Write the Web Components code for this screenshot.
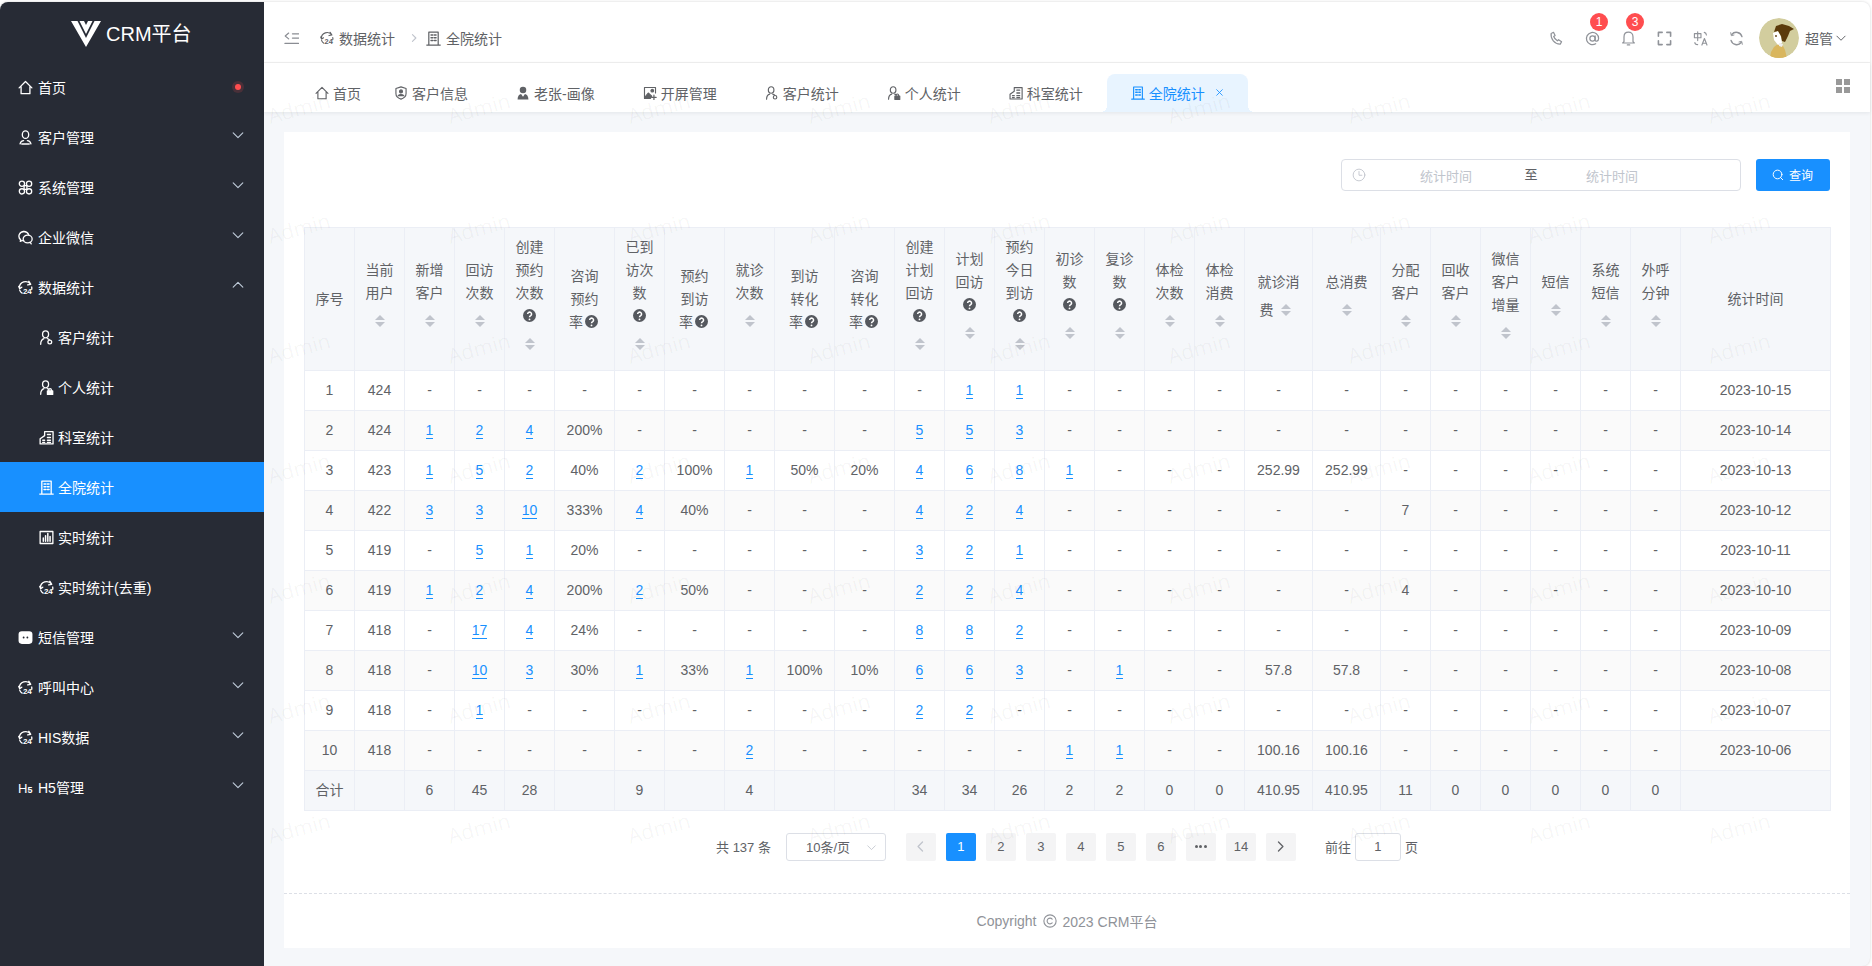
<!DOCTYPE html>
<html lang="zh"><head><meta charset="utf-8"><title>CRM平台</title>
<style>
html,body{margin:0;padding:0;height:100%;background:#fff;overflow:hidden}
body{font-family:"Liberation Sans","Noto Sans CJK SC",sans-serif;font-size:14px;color:#606266}
</style></head><body>
<crm-app></crm-app>
<script>
const ICONS={
home:'<path d="M1.2 8.400 8 1.600l6.800 6.800M3.300 7v7.600h9.400V7"/>',
user:'<ellipse cx="8" cy="5" rx="3.400" ry="4"/><path d="M2.200 14.800c.5-2.400 2.500-3.500 3.800-3.500M13.800 14.800c-.5-2.400-2.500-3.500-3.800-3.500M4 14.900h8"/>',
system:'<circle cx="4.200" cy="3.900" r="2.800"/><circle cx="11.800" cy="3.900" r="2.800"/><circle cx="4.200" cy="12.100" r="2.800"/><circle cx="11.800" cy="12.100" r="2.800"/><path d="M6.500 6h3v4h-3z"/>',
wechat:'<path d="M6.300 1.600a5.300 5 0 0 0-3.400 8.800l-.5 1.700 2.200-.9c.6.200 1.200.3 1.700.3"/><path d="M6.300 1.600a5.300 5 0 0 1 5 3.300"/><ellipse cx="10.300" cy="9.600" rx="4.800" ry="4.100"/><path d="M12.800 13l1.300 1.800"/>',
s24:'<path d="M1.600 8.500A6.500 6.500 0 0 1 13.400 4.500M14.600 7.500c.2.800.2 1.600 0 2.400M1.800 10.800c.4 1.300 1.300 2.500 2.600 3.200M11.600 1.400l2 3.200-3.300.6M.8 6.800l1 2.400 2.200-1.500"/><text x="5.200" y="15.400" font-size="8.500" font-weight="700" fill="currentColor" stroke="none" font-family="Liberation Sans">24</text>',
pkey:'<ellipse cx="7" cy="4.600" rx="3.200" ry="3.700"/><path d="M1.800 15.200c0-3.200 1.600-5.300 3.500-5.900M8.800 9.300c1 .2 1.700.6 2.300 1.200"/><circle cx="11.500" cy="12.800" r="2"/>',
plock:'<ellipse cx="7" cy="4.600" rx="3.200" ry="3.700"/><path d="M1.800 15.200c0-3.200 1.600-5.300 3.500-5.900M8.800 9.300c.6.100 1 .3 1.400.5"/><path d="M9 11.600h5.600v3.800H9z" fill="currentColor"/><path d="M10.400 11.600v-1a1.400 1.400 0 0 1 2.800 0v1"/>',
dept:'<path d="M1.200 14.800V9.400L6 6V1.800h9v13z"/><path d="M4 11h2M4 13.200h2M9 4.800h3.200M9 8h3.200M9 11h3.200M9 13.200h3.200" stroke-width="1.500"/>',
building:'<path d="M3 14.600V1.200h10v13.400M.8 15h14.400"/><path d="M5.400 4.200h1.800M8.900 4.200h1.800M5.400 7.200h1.800M8.900 7.200h1.800M5.400 10.200h1.800M8.900 10.200h1.800" stroke-width="1.600"/>',
chart:'<path d="M1.200 1.600h13.600v12.800H1.200z"/><path d="M4.600 12V8.400M7 12V6M9.400 12V3.800M11.800 12V7" stroke-width="1.600"/>',
msg:'<rect x=".6" y="1.200" width="14.800" height="13.600" rx="3.500" fill="currentColor" stroke="none"/><circle cx="6" cy="8" r="1" fill="#272b35" stroke="none"/><circle cx="10" cy="8" r="1" fill="#272b35" stroke="none"/>',
h5:'<text x="0" y="13.600" font-size="14" fill="currentColor" stroke="none" font-family="Liberation Sans">H</text><text x="10" y="14" font-size="9.500" font-weight="700" fill="currentColor" stroke="none" font-family="Liberation Sans">5</text>',
shield:'<path d="M8 1l5.800 1.900v5.700c0 3.300-2.700 5.400-5.800 6.400-3.100-1-5.800-3.100-5.800-6.400V2.900z"/><circle cx="8" cy="6.200" r="1.700" fill="currentColor"/><path d="M4.800 11c.6-1.800 5.800-1.800 6.400 0z" fill="currentColor"/>',
psolid:'<circle cx="8" cy="4.600" r="3.700" fill="currentColor" stroke="none"/><path d="M1.800 15.400c0-4 1.900-5.600 4-6.200l2.200 3 2.200-3c2.100.6 4 2.200 4 6.200z" fill="currentColor" stroke="none"/>',
imgplus:'<path d="M14.300 8V1.700H1.700v12.600H8"/><path d="M2 13l4-5 4 3.600-1.600 2.600H2z" fill="currentColor"/><circle cx="10.600" cy="5.400" r="1.500" fill="currentColor"/><path d="M12.500 10.500v5M10 13h5" stroke-width="1.400"/>',
collapse:'<path d="M9 3h6.500M9 7.500h6.500M1 13.300h14.500"/><path d="M5 2.200 1.300 5.300 5 8.400"/>',
chev:'<path d="M2.500 5.500 8 11l5.500-5.500"/>',
chevup:'<path d="M2.500 10.500 8 5l5.500 5.500"/>',
phone:'<path d="M2.300 2.600 4.800 1.400l1.700 3.300-1.500 1.200c.7 1.900 2 3.400 3.900 4.600l1.300-1.200 3.200 2.200-1.400 2.500c-6 .2-10.600-5.600-9.700-11.400z"/>',
at:'<circle cx="8" cy="8" r="2.800"/><path d="M10.800 5.300v4c0 2.400 3.700 2 3.700-1.300A6.500 6.500 0 1 0 11.400 13.600"/>',
bell:'<path d="M8 1.300c-2.900 0-4.800 2-4.800 5v5L1.800 12.800h12.400L12.800 11.300v-5c0-3-1.900-5-4.800-5z"/><path d="M6.800 14.800h2.400" stroke-width="1.500"/>',
full:'<path d="M1.500 5.500v-4h4M10.500 1.500h4v4M14.500 10.500v4h-4M5.500 14.500h-4v-4" stroke-width="1.700"/>',
trans:'<path d="M1.500 2.800h7v4.400h-7zM5 .8v9.400M2 12.200c0 1.500 1 2.300 3 2.300M12 1.500c1.400.3 2.200 1.200 2.300 2.700M9.500 15l2.700-7 2.700 7M10.500 13h3.500" stroke-width="1.200"/>',
refresh:'<path d="M13.800 6A6.200 6.200 0 0 0 3 3.700M2.200 10a6.200 6.200 0 0 0 10.800 2.300" stroke-width="1.500"/><path d="M1.800 1.800 2.500 5l2.800-.7M14.200 14.200 13.500 11l-2.800.7" stroke-width="1"/>',
clock:'<circle cx="8" cy="8" r="6.700"/><path d="M8 4v4.300h3.300"/>',
search:'<circle cx="7.400" cy="7.300" r="5.800"/><path d="M11.500 11.500l2.800 2.800"/>',
left:'<path d="M10.500 2.500 5 8l5.500 5.500"/>',
right:'<path d="M5.500 2.500 11 8l-5.500 5.500"/>',
close:'<path d="M3 3l10 10M13 3 3 13"/>',
copy:'<circle cx="8" cy="8" r="7"/><path d="M10.500 5.800a3.300 3.300 0 1 0 0 4.400"/>'
};
class CrmIcon extends HTMLElement{
  connectedCallback(){
    const s=this.getAttribute('size')||14,n=this.getAttribute('name'),w=this.getAttribute('sw')||1.3;
    this.attachShadow({mode:'open'}).innerHTML=`<style>:host{display:inline-flex;width:${s}px;height:${s}px;flex:none}svg{width:100%;height:100%;display:block}</style><svg viewBox="0 0 16 16" fill="none" stroke="currentColor" stroke-width="${w}" stroke-linecap="round" stroke-linejoin="round">${ICONS[n]||''}</svg>`;
  }
}
customElements.define('crm-icon',CrmIcon);

class CrmMenuItem extends HTMLElement{
  connectedCallback(){
    const a=n=>this.getAttribute(n);
    const sub=this.hasAttribute('sub'),arrow=a('arrow');
    this.attachShadow({mode:'open'}).innerHTML=`<style>
    :host{display:flex;align-items:center;height:50px;padding-left:${sub?39:18}px;color:#fff;font-size:14px;position:relative;background:${this.hasAttribute('active')?'#1890ff':'transparent'}}
    .t{margin-left:${sub?4:5}px}
    .a{position:absolute;left:231px;top:16px;color:#bfcbd9}
    .d{position:absolute;left:235px;top:22px;width:6px;height:6px;border-radius:50%;background:#ff4d4f;box-shadow:0 0 0 3px rgba(255,77,79,.16)}
    </style><crm-icon name="${a('icon')}" size="15" sw="1.400"></crm-icon><span class="t"><slot></slot></span>
    ${arrow?`<crm-icon class="a" name="${arrow=='up'?'chevup':'chev'}" size="14" sw="1.300"></crm-icon>`:''}${this.hasAttribute('dot')?'<i class="d"></i>':''}`;
  }
}
customElements.define('crm-menu-item',CrmMenuItem);

class CrmSidebar extends HTMLElement{
  connectedCallback(){
    this.attachShadow({mode:'open'}).innerHTML=`<style>
    :host{display:block;width:264px;flex:none;background:#272b35;color:#fff;border-radius:8px 0 0 0}
    .logo{height:60px;display:flex;align-items:center;padding-left:71px;font-size:20px;color:#fff;gap:5px}
    svg{width:30px;height:27px;display:block;margin-top:2px}
    </style>
    <div class="logo"><svg viewBox="0 0 30 27"><path d="M0 1h6.500L15 18 23.500 1H30L15 27z" fill="#fff"/><path d="M8.500 1h4.500l2 4 2-4h4.500L15 14z" fill="#fff"/></svg><span>CRM平台</span></div>
    <crm-menu-item icon="home" dot>首页</crm-menu-item>
    <crm-menu-item icon="user" arrow="down">客户管理</crm-menu-item>
    <crm-menu-item icon="system" arrow="down">系统管理</crm-menu-item>
    <crm-menu-item icon="wechat" arrow="down">企业微信</crm-menu-item>
    <crm-menu-item icon="s24" arrow="up">数据统计</crm-menu-item>
    <crm-menu-item sub icon="pkey">客户统计</crm-menu-item>
    <crm-menu-item sub icon="plock">个人统计</crm-menu-item>
    <crm-menu-item sub icon="dept">科室统计</crm-menu-item>
    <crm-menu-item sub icon="building" active>全院统计</crm-menu-item>
    <crm-menu-item sub icon="chart">实时统计</crm-menu-item>
    <crm-menu-item sub icon="s24">实时统计(去重)</crm-menu-item>
    <crm-menu-item icon="msg" arrow="down">短信管理</crm-menu-item>
    <crm-menu-item icon="s24" arrow="down">呼叫中心</crm-menu-item>
    <crm-menu-item icon="s24" arrow="down">HIS数据</crm-menu-item>
    <crm-menu-item icon="h5" arrow="down">H5管理</crm-menu-item>`;
  }
}
customElements.define('crm-sidebar',CrmSidebar);

class CrmHeader extends HTMLElement{
  connectedCallback(){
    const tool=(n,s,b)=>`<span class="tool"><crm-icon name="${n}" size="${s}"></crm-icon>${b?`<b>${b}</b>`:''}</span>`;
    this.attachShadow({mode:'open'}).innerHTML=`<style>
    :host{display:flex;align-items:center;height:60px;box-sizing:content-box;height:48px;padding:12px 23px 0 20px;border-bottom:1px solid #f0f0f0;background:#fff;color:#606266;border-radius:0 8px 0 0;font-size:14px}
    .c{color:#8a8d93;margin-right:21px}
    .bi{display:flex;align-items:center;gap:5px}
    .sep{color:#c0c4cc;margin:0 7px 0 14px;display:inline-flex}
    .r{margin-left:auto;display:flex;align-items:center}
    .tool{width:36px;height:40px;display:flex;align-items:center;justify-content:center;position:relative;color:#909399}
    .tool b{position:absolute;left:16px;top:-5px;width:18px;height:18px;border-radius:50%;background:#ff4d4f;color:#fff;font-size:12px;font-weight:400;display:flex;align-items:center;justify-content:center}
    .av{width:40px;height:40px;margin-left:5px;border-radius:50%;display:block}
    .n{margin-left:6px}
    .ch{margin-left:2px;color:#606266}
    </style>
    <crm-icon class="c" name="collapse" size="15"></crm-icon>
    <span class="bi"><crm-icon name="s24" size="14"></crm-icon>数据统计</span>
    <span class="sep"><crm-icon name="right" size="10" sw="1.800"></crm-icon></span>
    <span class="bi"><crm-icon name="building" size="15"></crm-icon>全院统计</span>
    <div class="r">${tool('phone',15)}${tool('at',15,'1')}${tool('bell',15,'3')}${tool('full',15)}${tool('trans',15)}${tool('refresh',15)}
    <svg class="av" viewBox="0 0 40 40"><circle cx="20" cy="20" r="20" fill="#d2cd9e"/><path d="M11 40l1-6 3-5 4-3 5 2 2 4 2 8z" fill="#d9b65e"/><path d="M14 15l5-2 3 6 1 6-4 2-4-5z" fill="#fff"/><path d="M15 14l2-6 6-2 7 2 5 3-4 2-2 5-3 6-3-1-1-5-3-5z" fill="#5b3a0b"/><path d="M20 25l4 1-1 3-3-1z" fill="#eee"/><circle cx="17" cy="18" r=".9" fill="#5b3a0b"/></svg>
    <span class="n">超管</span><crm-icon class="ch" name="chev" size="12" sw="1.300"></crm-icon></div>`;
  }
}
customElements.define('crm-header',CrmHeader);

class CrmTab extends HTMLElement{
  connectedCallback(){
    const act=this.hasAttribute('active');
    this.attachShadow({mode:'open'}).innerHTML=`<style>
    :host{display:flex;align-items:center;box-sizing:border-box;height:38px;padding:0 ${this.getAttribute('pr')||24}px 1px 24px;font-size:14px;color:${act?'#1890ff':'#606266'};position:relative;gap:4px;${act?'background:#e8f4ff;border-radius:8px 8px 0 0;':''}}
    .x{margin-left:6px;color:#1890ff}
    .f{position:absolute;bottom:0;width:6px;height:6px}
    .l{left:-6px;background:radial-gradient(circle at 0 0,transparent 6px,#e8f4ff 6px)}
    .rr{right:-6px;background:radial-gradient(circle at 100% 0,transparent 6px,#e8f4ff 6px)}
    </style><crm-icon name="${this.getAttribute('icon')}" size="14"></crm-icon><slot></slot>
    ${act?'<crm-icon class="x" name="close" size="9" sw="1.500"></crm-icon><i class="f l"></i><i class="f rr"></i>':''}`;
  }
}
customElements.define('crm-tab',CrmTab);

class CrmTabs extends HTMLElement{
  connectedCallback(){
    this.attachShadow({mode:'open'}).innerHTML=`<style>
    :host{display:flex;align-items:flex-end;height:49px;background:#fff;padding-left:27px;position:relative;box-shadow:0 1px 4px rgba(0,21,41,.08);z-index:1}
    .g{position:absolute;left:1572px;top:16px;display:grid;grid-template-columns:6px 6px;grid-auto-rows:6px;gap:2px}
    .g i{background:#999}
    </style>
    <crm-tab icon="home" pr="9">首页</crm-tab>
    <crm-tab icon="shield">客户信息</crm-tab>
    <crm-tab icon="psolid">老张-画像</crm-tab>
    <crm-tab icon="imgplus">开屏管理</crm-tab>
    <crm-tab icon="pkey">客户统计</crm-tab>
    <crm-tab icon="plock">个人统计</crm-tab>
    <crm-tab icon="dept">科室统计</crm-tab>
    <crm-tab icon="building" active>全院统计</crm-tab>
    <div class="g"><i></i><i></i><i></i><i></i></div>`;
  }
}
customElements.define('crm-tabs',CrmTabs);

class CrmSearch extends HTMLElement{
  connectedCallback(){
    this.attachShadow({mode:'open'}).innerHTML=`<style>
    :host{display:flex;justify-content:flex-end;gap:15px;height:32px}
    .p{width:400px;border:1px solid #dcdfe6;border-radius:4px;display:flex;align-items:center;font-size:13px;color:#c0c4cc;padding-left:10px;box-sizing:border-box;height:32px;background:#fff}
    .p crm-icon{margin-right:6px}
    .i{width:148px;text-align:center}
    .s{width:22px;text-align:center;color:#606266;margin-right:-4px;margin-top:-3px}
    .b{width:74px;border-radius:3px;background:#1890ff;color:#fff;display:flex;align-items:center;justify-content:center;font-size:12px;gap:5px;padding:0 1px 1px 0;box-sizing:border-box}
    </style>
    <div class="p"><crm-icon name="clock" size="14" sw="1"></crm-icon><span class="i">统计时间</span><span class="s">至</span><span class="i">统计时间</span></div>
    <div class="b"><crm-icon name="search" size="12"></crm-icon><span>查询</span></div>`;
  }
}
customElements.define('crm-search',CrmSearch);

const Q=1,S=2;
const COLS=[['序号',50,0],['当前用户',50,S],['新增客户',50,S],['回访次数',50,S],['创建预约次数',50,Q|S],['咨询预约率',60,Q],['已到访次数',50,Q|S],['预约到访率',60,Q],['就诊次数',50,S],['到访转化率',60,Q],['咨询转化率',60,Q],['创建计划回访',50,Q|S],['计划回访',50,Q|S],['预约今日到访',50,Q|S],['初诊数',50,Q|S],['复诊数',50,Q|S],['体检次数',50,S],['体检消费',50,S],['就诊消费',68,S],['总消费',68,S],['分配客户',50,S],['回收客户',50,S],['微信客户增量',50,S],['短信',50,S],['系统短信',50,S],['外呼分钟',50,S],['统计时间',150,0]];
const ROWS=[
'1,424,-,-,-,-,-,-,-,-,-,-,*1,*1,-,-,-,-,-,-,-,-,-,-,-,-,2023-10-15',
'2,424,*1,*2,*4,200%,-,-,-,-,-,*5,*5,*3,-,-,-,-,-,-,-,-,-,-,-,-,2023-10-14',
'3,423,*1,*5,*2,40%,*2,100%,*1,50%,20%,*4,*6,*8,*1,-,-,-,252.99,252.99,-,-,-,-,-,-,2023-10-13',
'4,422,*3,*3,*10,333%,*4,40%,-,-,-,*4,*2,*4,-,-,-,-,-,-,7,-,-,-,-,-,2023-10-12',
'5,419,-,*5,*1,20%,-,-,-,-,-,*3,*2,*1,-,-,-,-,-,-,-,-,-,-,-,-,2023-10-11',
'6,419,*1,*2,*4,200%,*2,50%,-,-,-,*2,*2,*4,-,-,-,-,-,-,4,-,-,-,-,-,2023-10-10',
'7,418,-,*17,*4,24%,-,-,-,-,-,*8,*8,*2,-,-,-,-,-,-,-,-,-,-,-,-,2023-10-09',
'8,418,-,*10,*3,30%,*1,33%,*1,100%,10%,*6,*6,*3,-,*1,-,-,57.8,57.8,-,-,-,-,-,-,2023-10-08',
'9,418,-,*1,-,-,-,-,-,-,-,*2,*2,-,-,-,-,-,-,-,-,-,-,-,-,-,2023-10-07',
'10,418,-,-,-,-,-,-,*2,-,-,-,-,-,*1,*1,-,-,100.16,100.16,-,-,-,-,-,-,2023-10-06'
];
const SUM='合计,,6,45,28,,9,,4,,,34,34,26,2,2,0,0,410.95,410.95,11,0,0,0,0,0,';
class CrmTable extends HTMLElement{
  connectedCallback(){
    const qi='<span class="q"><svg viewBox="0 0 12 12"><circle cx="6" cy="6" r="6" fill="#55585e"/><path d="M4.300 4.700a1.800 1.800 0 1 1 2.800 1.500c-.8.500-1.100.8-1.100 1.500" fill="none" stroke="#fff" stroke-width="1.400"/><circle cx="6" cy="9.600" r=".85" fill="#fff"/></svg></span>';
    const car='<span class="cw"><i class="u"></i><i class="d"></i></span>';
    const head=COLS.map(([t,w,f])=>`<th><div class="c">${t}${f&Q?qi:''}${f&S?car:''}</div></th>`).join('');
    const cell=v=>`<td><div class="c">${v[0]=='*'?`<a>${v.slice(1)}</a>`:v}</div></td>`;
    const rows=ROWS.map((r,i)=>`<tr class="${i%2?'st':''}">${r.split(',').map(cell).join('')}</tr>`).join('');
    this.attachShadow({mode:'open'}).innerHTML=`<style>
    :host{display:block}
    table{table-layout:fixed;border-collapse:separate;border-spacing:0;width:1526px;border-top:1px solid #ebeef5;border-left:1px solid #ebeef5;font-size:14px;color:#606266;box-sizing:border-box}
    th,td{padding:8px 0;border-right:1px solid #ebeef5;border-bottom:1px solid #ebeef5;text-align:center;vertical-align:middle;font-weight:400}
    th{background:#f5f7fa}
    .c{padding:0 10px;line-height:23px;word-break:break-all}
    tr.st td{background:#fafafa}
    tr.sm td{background:#f5f7fa}
    a{display:inline-block;line-height:16px;border-bottom:1px solid #1890ff;color:#1890ff}
    .q{display:inline-block;width:17px;height:14px;text-align:center;vertical-align:-2px}
    .q svg{width:13px;height:13px;display:block;margin:0 auto}
    .cw{display:inline-flex;position:relative;width:24px;height:34px;vertical-align:middle}
    .cw i{position:absolute;left:7px;width:0;height:0;border:5px solid transparent}
    .cw .u{border-bottom-color:#c0c4cc;top:5px}
    .cw .d{border-top-color:#c0c4cc;bottom:7px}
    </style><table><colgroup>${COLS.map(c=>`<col style="width:${c[1]}px">`).join('')}</colgroup>
    <thead><tr>${head}</tr></thead><tbody>${rows}<tr class="sm">${SUM.split(',').map(cell).join('')}</tr></tbody></table>`;
  }
}
customElements.define('crm-table',CrmTable);

class CrmPagination extends HTMLElement{
  connectedCallback(){
    const pg=['1','2','3','4','5','6'].map((p,i)=>`<span class="b${i?'':' on'}">${p}</span>`).join('');
    this.attachShadow({mode:'open'}).innerHTML=`<style>
    :host{display:flex;justify-content:center;align-items:center;height:28px;font-size:13px;color:#606266;padding-bottom:0}
    .tx{margin-top:-2px}
    .sel{height:26px;border:1px solid #dcdfe6;border-radius:3px;margin:0 20px 0 15px;display:flex;align-items:center;padding:0 0 1px 19px;box-sizing:content-box;width:79px;height:25px;position:relative}
    .sel crm-icon{position:absolute;right:8px;top:8px;color:#c0c4cc}
    .b{width:30px;height:28px;box-sizing:border-box;padding-bottom:1px;background:#f4f4f5;border-radius:2px;display:flex;align-items:center;justify-content:center;margin-right:10px;color:#606266}
    .b.on{background:#1890ff;color:#fff}
    .b.dis{color:#c0c4cc}
    .b.m{margin-right:0}
    .dots{display:flex;gap:1.500px}.dots i{width:3px;height:3px;border-radius:50%;background:#606266}
    .go{margin-left:29px;margin-top:-2px}
    .inp{width:44px;height:25px;padding-bottom:1px;border:1px solid #dcdfe6;border-radius:3px;display:flex;align-items:center;justify-content:center;margin:0 4px}
    </style>
    <span class="tx">共 137 条</span><div class="sel">10条/页<crm-icon name="chev" size="11" sw="1.200"></crm-icon></div>
    <span class="b dis"><crm-icon name="left" size="13" sw="1.600"></crm-icon></span>${pg}
    <span class="b"><span class="dots"><i></i><i></i><i></i></span></span><span class="b">14</span>
    <span class="b m"><crm-icon name="right" size="13" sw="1.600"></crm-icon></span>
    <span class="go">前往</span><span class="inp">1</span><span class="tx">页</span>`;
  }
}
customElements.define('crm-pagination',CrmPagination);

class CrmFooter extends HTMLElement{
  connectedCallback(){
    this.attachShadow({mode:'open'}).innerHTML=`<style>
    :host{display:flex;align-items:center;justify-content:center;height:54px;border-top:1px dashed #dcdfe6;color:#909399;font-size:14px;gap:6px}
    </style><span>Copyright</span><crm-icon name="copy" size="14" sw="1.300"></crm-icon><span>2023 CRM平台</span>`;
  }
}
customElements.define('crm-footer',CrmFooter);

class CrmCard extends HTMLElement{
  connectedCallback(){
    this.attachShadow({mode:'open'}).innerHTML=`<style>
    :host{display:flex;flex-direction:column;flex:1;background:#fff}
    .in{padding:27px 20px 0;flex:1}
    crm-table{margin-top:36px}
    crm-pagination{margin-top:22px}
    </style><div class="in"><crm-search></crm-search><crm-table></crm-table><crm-pagination></crm-pagination></div><crm-footer></crm-footer>`;
  }
}
customElements.define('crm-card',CrmCard);

class CrmWatermark extends HTMLElement{
  connectedCallback(){
    let h='';
    for(let r=0;r<7;r++)for(let c=0;c<9;c++)h+=`<span style="left:${c*180+3}px;top:${r*120+92}px">Admin</span>`;
    this.attachShadow({mode:'open'}).innerHTML=`<style>
    :host{position:absolute;left:264px;top:0;right:0;bottom:0;overflow:hidden;pointer-events:none;z-index:5}
    span{position:absolute;font:21px "Open Sans",sans-serif;color:rgba(0,0,0,.045);transform:rotate(-15deg);white-space:nowrap}
    </style>${h}`;
  }
}
customElements.define('crm-watermark',CrmWatermark);

class CrmApp extends HTMLElement{
  connectedCallback(){
    this.attachShadow({mode:'open'}).innerHTML=`<style>
    :host{display:flex;height:964px;width:1870px;margin-top:2px;position:relative;border-radius:8px;background:#f5f7fa;box-shadow:0 0 3px rgba(0,0,0,.18)}
    .m{flex:1;display:flex;flex-direction:column;min-width:0}
    .b{flex:1;display:flex;flex-direction:column;padding:20px 20px 18px}
    </style><crm-sidebar></crm-sidebar><div class="m"><crm-header></crm-header><crm-tabs></crm-tabs><div class="b"><crm-card></crm-card></div></div><crm-watermark></crm-watermark>`;
  }
}
customElements.define('crm-app',CrmApp);
</script>
</body></html>
